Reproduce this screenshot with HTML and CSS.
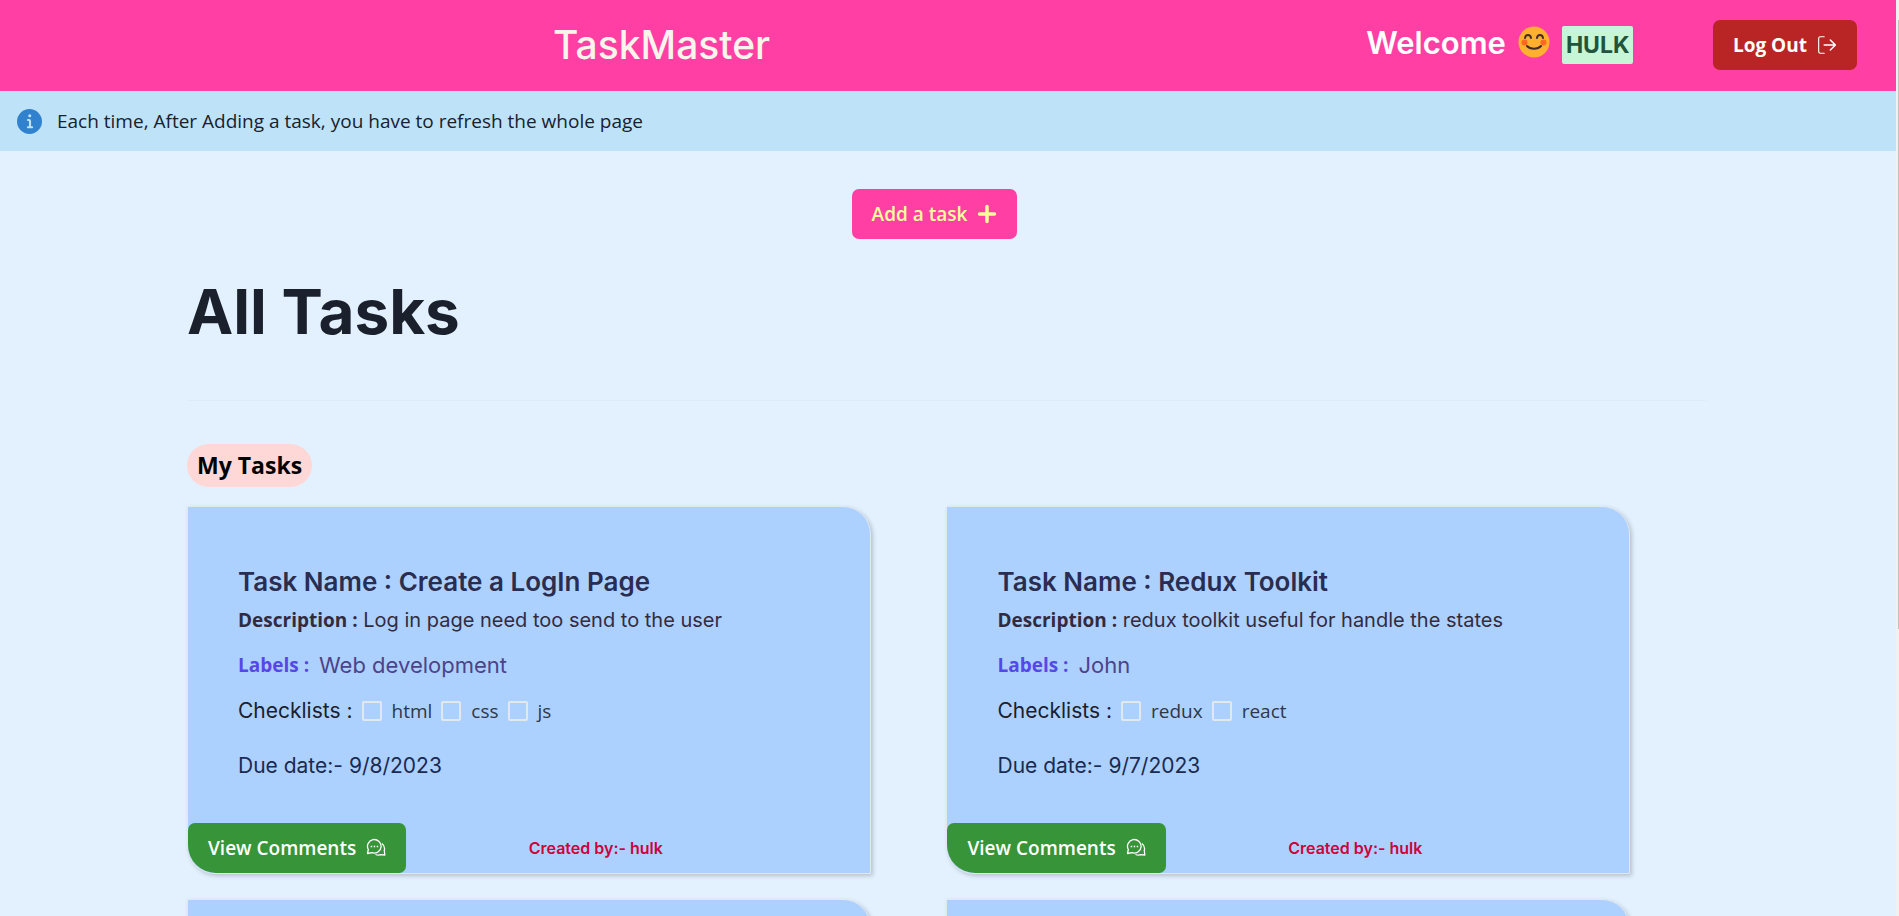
FILE: index.html
```html
<!DOCTYPE html>
<html lang="en">
<head>
<meta charset="utf-8">
<title>TaskMaster</title>
<link rel="stylesheet" href="styles.css">
</head>
<body>
<div class="page">
  <header class="navbar">
    <h1 class="brand">TaskMaster</h1>
    <div class="account">
      <h2 class="welcome">Welcome
        <svg class="emoji" viewBox="0 0 32 32" role="img" aria-label="smiling face"><circle cx="16" cy="16" r="15.5" fill="#ffb02e"/><circle cx="6.5" cy="16.5" r="3" fill="#ff6723"/><circle cx="25.5" cy="16.5" r="3" fill="#ff6723"/><g fill="none" stroke="#402a32" stroke-width="2" stroke-linecap="round"><path d="M7 12c.5-4 5.500-4 6 0M19 12c.5-4 5.500-4 6 0M9 20c3 3.600 11 3.600 14 0"/></g></svg>
        <span class="user">HULK</span>
      </h2>
      <button class="button logout" type="button">Log Out
        <svg class="icon" viewBox="-1 -1 18 18" fill="none" stroke="currentColor" stroke-linecap="round" stroke-linejoin="round"><path d="M5.500 .6H2A1.500 1.500 0 0 0 .5 2.100v11.800a1.500 1.500 0 0 0 1.500 1.500H5.500"/><path d="M5.500 8H15.500M11 3.500 15.500 8 11 12.500" stroke-width="1.400"/></svg>
      </button>
    </div>
  </header>
  <div class="alert" role="alert">
    <svg class="alert-icon" viewBox="0 0 24 24" fill="#3182ce"><path d="M12,0A12,12,0,1,0,24,12,12.013,12.013,0,0,0,12,0Zm.25,5a1.500,1.500,0,1,1-1.500,1.500A1.500,1.500,0,0,1,12.250,5ZM14.500,18.500h-4a1,1,0,0,1,0-2h.75a.25.25,0,0,0,.25-.25v-4.500a.25.25,0,0,0-.25-.25H10.500a1,1,0,0,1,0-2h1a2,2,0,0,1,2,2v4.750a.25.25,0,0,0,.25.25h.75a1,1,0,1,1,0,2Z"/></svg>
    <p>Each time, After Adding a task, you have to refresh the whole page</p>
  </div>
  <main class="content">
    <button class="button add" type="button">Add a task
      <svg class="icon" viewBox="0 0 16 16" fill="none" stroke="currentColor" stroke-width="2.800" stroke-linecap="round"><path d="M8 2v12M2 8h12"/></svg>
    </button>
    <h2 class="heading">All Tasks</h2>
    <hr class="divider">
    <h3 class="pill">My Tasks</h3>
    <div class="grid">
      <article class="card">
        <div class="card-body">
          <h4 class="name">Task Name : Create a LogIn Page</h4>
          <p class="description"><b>Description :</b> Log in page need too send to the user</p>
          <p class="labels"><b>Labels :</b><span>Web development</span></p>
          <div class="checks"><span class="checks-title">Checklists :</span>
            <label><input type="checkbox">html</label><label><input type="checkbox">css</label><label><input type="checkbox">js</label>
          </div>
          <p class="due">Due date:- 9/8/2023</p>
        </div>
        <div class="card-footer">
          <button class="button comments" type="button">View Comments
            <svg class="icon" viewBox="0 0 20 20" fill="none" stroke="currentColor" stroke-width="1.300" stroke-linejoin="round"><path d="M1.500 15.500 2.300 11.500A6.800 6.800 0 1 1 6 14.700zM15.800 5.500A6.500 6.500 0 0 1 18.300 12.500l.5 4.500-4-.3A8 8 0 0 1 9.500 16.500"/><path d="M4.700 8.500h1.500M7.700 8.500h1.500M10.700 8.500h1.500"/></svg>
          </button>
          <p class="author">Created by:- hulk</p>
        </div>
      </article>
      <article class="card">
        <div class="card-body">
          <h4 class="name">Task Name : Redux Toolkit</h4>
          <p class="description"><b>Description :</b> redux toolkit useful for handle the states</p>
          <p class="labels"><b>Labels :</b><span>John</span></p>
          <div class="checks"><span class="checks-title">Checklists :</span>
            <label><input type="checkbox">redux</label><label><input type="checkbox">react</label>
          </div>
          <p class="due">Due date:- 9/7/2023</p>
        </div>
        <div class="card-footer">
          <button class="button comments" type="button">View Comments
            <svg class="icon" viewBox="0 0 20 20" fill="none" stroke="currentColor" stroke-width="1.300" stroke-linejoin="round"><path d="M1.500 15.500 2.300 11.500A6.800 6.800 0 1 1 6 14.700zM15.800 5.500A6.500 6.500 0 0 1 18.300 12.500l.5 4.500-4-.3A8 8 0 0 1 9.500 16.500"/><path d="M4.700 8.500h1.500M7.700 8.500h1.500M10.700 8.500h1.500"/></svg>
          </button>
          <p class="author">Created by:- hulk</p>
        </div>
      </article>
      <article class="card"></article>
      <article class="card"></article>
    </div>
  </main>
</div>
<div class="scrollbar" aria-hidden="true"><div class="thumb"></div></div>
</body>
</html>
```
FILE: styles.css
```css
* { box-sizing: border-box; margin: 0; padding: 0; }

html { height: 100%; }

body {
  display: flex;
  height: 100vh;
  overflow: hidden;
  font-family: "Open Sans", "Noto Sans", sans-serif;
  font-size: 20px;
  line-height: 30px;
  color: #1a202c;
  background: #e3f1ff;
}

.page { flex: 1; min-width: 0; }

.navbar {
  display: grid;
  grid-template-columns: 70% 30%;
  align-items: center;
  padding: 20px 0 21px;
  background: #ff3fa4;
}

.brand {
  padding-right: 4px;
  font: 500 39px/50px Inter, sans-serif;
  color: #faf5eb;
  text-align: center;
}

.account {
  display: flex;
  justify-content: space-between;
  align-items: center;
  padding: 0 39px;
}

.welcome {
  display: flex;
  align-items: flex-start;
  gap: 12px;
  font: 600 31px/34px Inter, sans-serif;
  color: #fff;
}

.emoji { width: 32px; height: 32px; }

.user {
  padding: 0 4px;
  border-radius: 2px;
  background: #c6f6d5;
  color: #22543d;
  font: 700 23px/38px Inter, sans-serif;
}

.button {
  display: inline-flex;
  align-items: center;
  gap: 10px;
  height: 50px;
  padding: 0 20px;
  border: 0;
  border-radius: 7px;
  color: #fff;
  font: 600 19px/24px "Open Sans", sans-serif;
  white-space: nowrap;
}

.icon { width: 20px; height: 20px; }

.logout { background: #b92525; font-weight: 700; }

.alert {
  display: flex;
  align-items: center;
  gap: 15px;
  padding: 15px 17px;
  background: #bee3f8;
}

.alert p { font-size: 19px; }

.alert-icon { width: 25px; height: 25px; }

.content {
  display: flex;
  flex-direction: column;
  align-items: flex-start;
  padding: 38px 190px 0 187px;
}

.add {
  align-self: center;
  margin-right: 24px;
  background: #ff3fa4;
  color: #fbff9a;
}

.heading {
  margin-top: 33px;
  font: 700 62px/80px Inter, sans-serif;
}

.divider {
  width: 100%;
  margin: 48px 0 43px;
  border: 0;
  border-top: 1px solid #dceafa;
}

.pill {
  padding: 0 10px;
  border-radius: 22px;
  background: #fed7d7;
  color: #000;
  font: 700 23px/43px "Open Sans", sans-serif;
}

.grid {
  display: grid;
  grid-template-columns: 45% 45%;
  column-gap: 5%;
  row-gap: 25px;
  width: 100%;
  margin-top: 19px;
}

.card {
  display: flex;
  flex-direction: column;
  justify-content: space-between;
  min-height: 368px;
  border: 1px solid #e2e8f0;
  border-radius: 0 28px 0 28px;
  background: #add1ff;
  box-shadow: 2px 2px 4px rgba(0, 0, 0, 0.2);
}

.card-body { padding: 57px 50px 0; }

.name {
  color: #2a2c50;
  font: 600 26px/36px Inter, sans-serif;
}

.description {
  margin-top: 5px;
  color: #322b40;
  font: 400 20px/30px Inter, sans-serif;
}

.description b,
.labels b { font: 700 19px/30px "Open Sans", sans-serif; }

.labels {
  display: flex;
  gap: 10px;
  margin-top: 15px;
  color: #4c4389;
  font: 400 22px/30px Inter, sans-serif;
}

.labels b { color: #5648e8; }

.checks {
  display: flex;
  align-items: center;
  gap: 9px;
  margin-top: 16px;
  color: #2d3748;
  font-size: 19px;
}

.checks-title { color: #1a202c; font: 400 21px/30px Inter, sans-serif; }

.checks label { display: flex; align-items: center; gap: 10px; }

.checks input {
  appearance: none;
  width: 20px;
  height: 20px;
  border: 2px solid #e2e8f0;
  border-radius: 2px;
}

.due {
  margin-top: 25px;
  color: #1a2a50;
  font: 400 21px/30px Inter, sans-serif;
}

.card-footer {
  display: grid;
  grid-template-columns: 50% 50%;
  align-items: center;
}

.comments {
  justify-self: start;
  border-radius: 7px 7px 7px 28px;
  background: #389438;
}

.author {
  color: #cf003b;
  font: 600 16px/20px Inter, sans-serif;
}

.scrollbar {
  width: 3px;
  padding: 20px 0 0 2px;
  background: #f1f1f1;
}

.thumb { height: 68%; background: #c1c1c1; }
```
